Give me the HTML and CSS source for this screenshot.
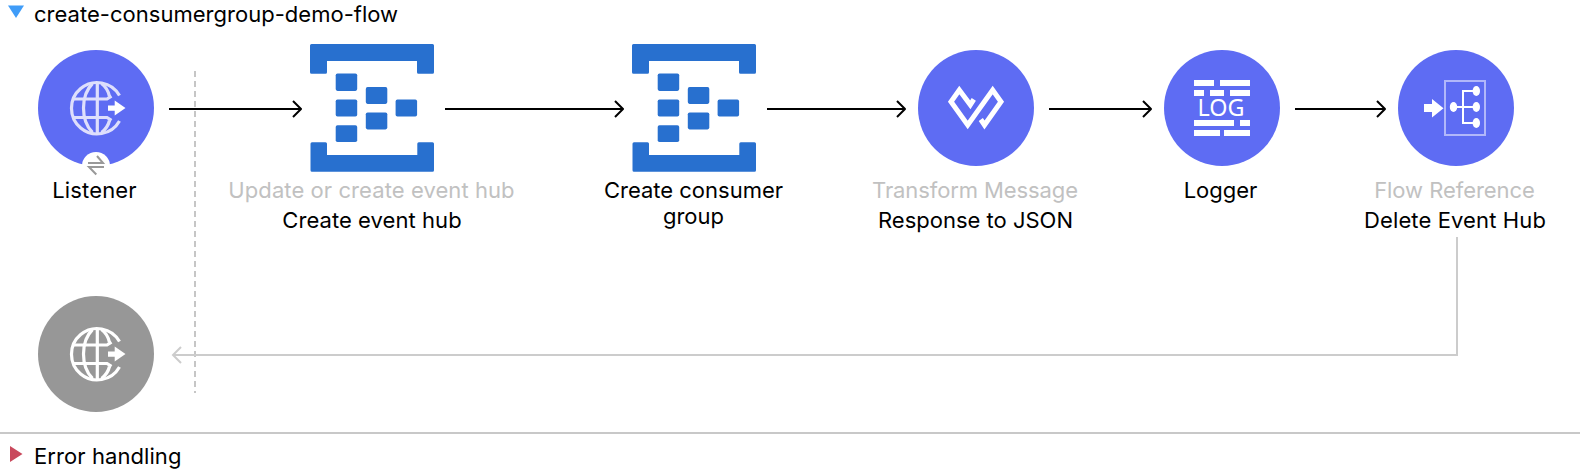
FILE: index.html
```html
<!DOCTYPE html>
<html lang="en">
<head>
<meta charset="utf-8">
<title>create-consumergroup-demo-flow</title>
<link rel="stylesheet" href="styles.css">
</head>
<body>
<svg class="defs" width="0" height="0" aria-hidden="true">
  <symbol id="globe" viewBox="0 0 116 116">
    <g fill="none" stroke="currentColor" stroke-width="3.200">
      <path d="M81.500 45.500A25.700 25.700 0 1 0 81.500 71"/>
      <path d="M59.300 33v50M35 49h34l4.500-2.800M35 67.500h34l4.500 2.800"/>
      <path d="M54.500 33.500c-12 12-12 37 0 49M63.500 33.500c4 3 7 8 8 13M63.500 82.500c4-3 7-8 8-12"/>
    </g>
    <path fill="#fff" d="M70 55.500h6.700v-5L87.500 58l-10.800 7.600v-4.800H70z"/>
  </symbol>
  <symbol id="hub" viewBox="0 0 126 130">
    <path d="M2.500 1h121q1.500 0 1.500 1.500v26.700q0 1.500-1.500 1.500h-14q-1.500 0-1.500-1.500V18H18v11.200q0 1.500-1.500 1.500h-14Q1 30.700 1 29.200v-26.700Q1 1 2.500 1z"/>
    <path d="M3 99.300h13.500q1.500 0 1.500 1.500V112h90.300v-11.200q0-1.500 1.500-1.500h13.700q1.500 0 1.500 1.500v26.400q0 1.500-1.500 1.500H3q-1.500 0-1.500-1.500v-26.400Q1.500 99.300 3 99.300z"/>
    <rect x="26.700" y="30.500" width="21.500" height="17.400" rx="1.800"/>
    <rect x="26.700" y="56.500" width="21.500" height="17" rx="1.800"/>
    <rect x="26.700" y="82.200" width="21.500" height="16.800" rx="1.800"/>
    <rect x="56.800" y="44.100" width="21.500" height="16.800" rx="1.800"/>
    <rect x="56.800" y="69.400" width="21.500" height="17" rx="1.800"/>
    <rect x="86.600" y="56.600" width="21.500" height="17" rx="1.800"/>
  </symbol>
</svg>

<header class="bar bar-flow">
  <svg class="toggle" width="16" height="14" viewBox="0 0 16 14"><path class="open" d="M0 .5h16L8 13z"/></svg>
  <h1 class="title title-flow">create-consumergroup-demo-flow</h1>
</header>

<main class="canvas">
  <svg class="wires" viewBox="0 30 1580 402">
    <path class="divider" d="M195 71V393"/>
    <path class="wire" d="M169 109H301M293 101l8 8l-8 8"/>
    <path class="wire" d="M445 109H623M615 101l8 8l-8 8"/>
    <path class="wire" d="M767 109H905M897 101l8 8l-8 8"/>
    <path class="wire" d="M1049 109H1151M1143 101l8 8l-8 8"/>
    <path class="wire" d="M1295 109H1385M1377 101l8 8l-8 8"/>
    <path class="wire wire-return" d="M1457 237V355H173M181 347l-8 8l8 8"/>
  </svg>

  <section class="node listener">
    <svg class="disc" viewBox="0 0 116 116"><circle cx="58" cy="58" r="58"/><use href="#globe"/></svg>
    <p class="name">Listener</p>
    <svg class="badge" viewBox="0 0 28 28">
      <circle cx="14" cy="14" r="14"/>
      <path d="M6 11h15L15 4M22 15H7l7.300 7.500"/>
    </svg>
  </section>

  <section class="node create-hub">
    <svg class="hub"><use href="#hub"/></svg>
    <p class="kind">Update or create event hub</p>
    <p class="name">Create event hub</p>
  </section>

  <section class="node create-group">
    <svg class="hub"><use href="#hub"/></svg>
    <p class="name">Create consumer<br>group</p>
  </section>

  <section class="node transform">
    <svg class="disc" viewBox="0 0 116 116">
      <circle cx="58" cy="58" r="58"/>
      <path class="weave" d="M55.800 49.300L52.300 54.800L41.300 40L33 51.700L49.700 75L74.700 40L83 51.700L66.500 75L62.800 69.500"/>
    </svg>
    <p class="kind">Transform Message</p>
    <p class="name">Response to JSON</p>
  </section>

  <section class="node logger">
    <svg class="disc" viewBox="0 0 116 116">
      <circle cx="58" cy="58" r="58"/>
      <path class="solid" d="M30 30h20v6H30zM56 30h30v6H56zM30 40h10v6H30zM46 40h14v6H46zM66 40h20v6H66zM30 70h40v6H30zM76 70h10v6H76zM30 80h26v6H30zM60 80h26v6H60z"/>
      <text class="log" x="33.500" y="66" textLength="47" lengthAdjust="spacingAndGlyphs">LOG</text>
    </svg>
    <p class="name">Logger</p>
  </section>

  <section class="node reference">
    <svg class="disc" viewBox="0 0 116 116">
      <circle cx="58" cy="58" r="58"/>
      <rect class="frame" x="47" y="31" width="40" height="54"/>
      <path class="solid" d="M26 54h8v-5l11.500 9.200L34 67.500V62h-8z"/>
      <path class="tree" d="M56 57h22M78 41H65v32h13"/>
      <g class="solid">
        <ellipse cx="55.500" cy="57" rx="3.700" ry="5"/>
        <ellipse cx="78.300" cy="41" rx="3.700" ry="5"/>
        <ellipse cx="78.300" cy="57" rx="3.700" ry="5"/>
        <ellipse cx="78.300" cy="73" rx="3.700" ry="5"/>
      </g>
    </svg>
    <p class="kind">Flow Reference</p>
    <p class="name">Delete Event Hub</p>
  </section>

  <section class="node response">
    <svg class="disc" viewBox="0 0 116 116"><circle cx="58" cy="58" r="58"/><use href="#globe"/></svg>
  </section>
</main>

<footer class="bar bar-error">
  <svg class="toggle" width="16" height="16" viewBox="0 0 16 16"><path class="closed" d="M2 0l12.500 8L2 16z"/></svg>
  <h2 class="title title-error">Error handling</h2>
</footer>
</body>
</html>
```
FILE: styles.css
```css
* { box-sizing: border-box; }
body {
  margin: 0;
  background: #fff;
  color: #000;
  font: 22px/28px Inter, "Liberation Sans", sans-serif;
  overflow: hidden;
}
h1, h2, p { margin: 0; font-size: inherit; font-weight: 400; }
svg { display: block; }
.defs { position: absolute; }

.bar { display: flex; gap: 10px; padding-left: 8px; }
.bar-flow { height: 30px; }
.bar-error { height: 42px; padding-top: 8px; }
.bar-flow .toggle { margin-top: 5px; }
.bar-error .toggle { margin-top: 4px; }
.open { fill: #3f9cf8; }
.closed { fill: #c9495c; }
.title { white-space: nowrap; }
.title-flow { letter-spacing: .02px; }
.title-error { letter-spacing: .08px; }

.canvas {
  position: relative;
  height: 404px;
  border-bottom: 2px solid #c8c8c8;
}
.wires { width: 1580px; height: 402px; }
.wire { fill: none; stroke: #000; stroke-width: 2; stroke-linejoin: round; }
.wire-return { stroke: #ccc; stroke-linejoin: miter; }
.divider { stroke: #c6c6c6; stroke-width: 2; stroke-dasharray: 6 4; }

.node {
  position: absolute;
  top: 20px;
  width: 320px;
  display: flex;
  flex-direction: column;
  align-items: center;
  text-align: center;
  white-space: nowrap;
}
.listener { left: -64px; }
.create-hub { left: 212px; top: 13px; }
.create-group { left: 534px; top: 13px; }
.transform { left: 816px; }
.logger { left: 1062px; }
.reference { left: 1296px; }
.response { left: -64px; top: 266px; }

.disc { width: 116px; height: 116px; margin-bottom: 10px; fill: #5e6cf3; color: #dedffc; }
.response .disc { fill: #979797; color: #fff; }
.hub { width: 126px; height: 130px; margin-bottom: 3px; fill: #2870cf; }
.kind { color: #c1c1c1; margin-bottom: 2px; }
.create-group .name { line-height: 26px; padding: 1px 1px 0 0; }
.listener .name { padding-right: 3px; letter-spacing: .15px; }
.create-hub .kind { padding-right: 1px; letter-spacing: .08px; }
.create-hub .name { letter-spacing: .06px; }
.transform .kind { padding-right: 2px; letter-spacing: -.1px; }
.transform .name { padding-right: 1px; }
.logger .name { padding-right: 3px; }
.reference .kind { padding-right: 3px; letter-spacing: -.05px; }
.reference .name { padding-right: 2px; letter-spacing: .12px; }

.solid { fill: #fff; }
.weave { fill: none; stroke: #fff; stroke-width: 5; }
.log { fill: #fff; font: 23px "Noto Sans", sans-serif; }
.frame { fill: none; stroke: #b1b7fa; stroke-width: 2; }
.tree { fill: none; stroke: #fff; stroke-width: 2; }

.badge { position: absolute; left: 146px; top: 102px; width: 28px; height: 28px; fill: #fff; }
.badge path { fill: none; stroke: #999; stroke-width: 2; }
```
